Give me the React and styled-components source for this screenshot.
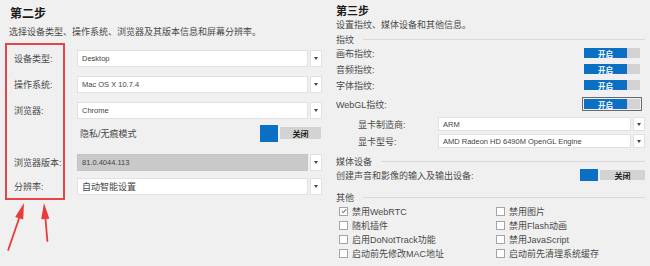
import styled, { createGlobalStyle } from 'styled-components'

const GlobalStyle = createGlobalStyle`
  html, body {
    margin: 0;
    padding: 0;
    background: #f0f0f0;
  }
  body {
    font-family: "Liberation Sans", "Noto Sans CJK SC", sans-serif;
    color: #4a4a4a;
  }
`

const Page = styled.div`
  width: 650px;
  height: 266px;
  overflow: hidden;
  display: grid;
  grid-template-columns: 333px 1fr;
  background: #f0f0f0;
`

const LeftPanel = styled.section`
  position: relative;
  display: flex;
  flex-direction: column;
`

const RightPanel = styled.section`
  display: flex;
  flex-direction: column;
  padding: 0 5px 0 3px;
`

const Title = styled.h2`
  margin: ${(p) => p.$top}px 0 0 ${(p) => p.$left}px;
  font-family: "Noto Sans CJK SC", sans-serif;
  font-size: ${(p) => p.$size}px;
  font-weight: 700;
  line-height: 16px;
  color: #1a1a1a;
`

const Subtitle = styled.p`
  margin: ${(p) => p.$top || 0}px 0 0 ${(p) => p.$left || 0}px;
  font-size: 9px;
  line-height: 14px;
  color: #4a4a4a;
  white-space: nowrap;
`

/* ---------- left form ---------- */

const Form = styled.div`
  position: relative;
  margin-top: 2px;
  display: flex;
  flex-direction: column;
  padding-right: 11px;
`

const Row = styled.div`
  display: grid;
  grid-template-columns: 77px 1fr;
  align-items: center;
  height: 18px;
  margin-top: ${(p) => p.$top}px;
`

const Label = styled.span`
  padding-left: 14px;
  font-size: 9px;
  color: #4a4a4a;
  white-space: nowrap;
`

const SelectBox = styled.div`
  display: flex;
  gap: 2px;
  height: ${(p) => p.$h || 17}px;
`

const SelectValue = styled.div`
  flex: 1;
  background: ${(p) => (p.$disabled ? '#c9c9c9' : '#fff')};
  border: 1px solid ${(p) => (p.$disabled ? '#c4c4c4' : '#e1e1e1')};
  padding-left: 4px;
  display: flex;
  align-items: center;
  font-size: ${(p) => (p.$cjk ? 9 : 7.5)}px;
  color: #444;
  white-space: nowrap;
  overflow: hidden;
`

const SelectArrow = styled.div`
  width: 10px;
  background: #fff;
  border: 1px solid #e1e1e1;
  display: flex;
  align-items: center;
  justify-content: center;

  &::after {
    content: '';
    border-left: 2px solid transparent;
    border-right: 2px solid transparent;
    border-top: 3px solid #444;
  }
`

const FieldLine = styled.div`
  display: flex;
  align-items: center;
  justify-content: space-between;
  padding-left: 3px;
  padding-right: 1px;
  font-size: 9px;
`

const RedFrame = styled.div`
  position: absolute;
  left: 5px;
  top: 2px;
  width: 56px;
  height: 153px;
  border: 2px solid #e2464a;
  pointer-events: none;
`

const Arrows = styled.svg`
  position: absolute;
  left: 0;
  top: 198px;
`

/* ---------- toggles ---------- */

const OffToggle = styled.div`
  display: flex;
  align-items: center;
  gap: 2px;
`

const OffKnob = styled.span`
  width: ${(p) => p.$w}px;
  height: ${(p) => p.$h}px;
  background: #0b6fc4;
`

const OffLabel = styled.span`
  width: ${(p) => p.$w}px;
  height: ${(p) => p.$h}px;
  background: #d3d3d3;
  display: flex;
  align-items: center;
  justify-content: center;
  font-size: 8px;
  font-weight: 700;
  color: #222;
`

const OnToggle = styled.div`
  display: flex;
  margin-right: ${(p) => (p.$focused ? 3 : 5)}px;
  padding: ${(p) => (p.$focused ? '1px' : '0')};
  border: ${(p) => (p.$focused ? '1px solid #6a6a6a' : 'none')};
`

const OnLabel = styled.span`
  width: 43px;
  height: 10px;
  background: #0b6fc4;
  color: #fff;
  font-size: 7.5px;
  font-weight: 700;
  display: flex;
  align-items: center;
  justify-content: center;
`

const OnRest = styled.span`
  width: 13px;
  height: 10px;
  background: #d3d3d3;
`

/* ---------- right side ---------- */

const Section = styled.div`
  display: flex;
  align-items: center;
  height: 14px;
  margin-top: ${(p) => p.$top || 0}px;
  font-size: 9px;
  color: #4a4a4a;

  &::after {
    content: '';
    flex: 1;
    height: 1px;
    margin-left: 9px;
    background: #dadada;
  }
`

const SwitchRow = styled.div`
  display: flex;
  align-items: center;
  justify-content: space-between;
  height: ${(p) => p.$h || 16}px;
  margin-top: ${(p) => p.$top || 0}px;
  font-size: 9px;
`

const GpuRow = styled.div`
  display: grid;
  grid-template-columns: 102px 1fr;
  align-items: center;
  margin-top: ${(p) => p.$top}px;
  font-size: 9px;
`

const GpuLabel = styled.span`
  padding-left: 22px;
`

const Checks = styled.div`
  display: grid;
  grid-template-columns: 157px 1fr;
  grid-auto-rows: 14px;
  padding-left: 3px;
`

const CheckItem = styled.label`
  display: flex;
  align-items: center;
  gap: 4px;
  font-size: 9px;
  color: #4a4a4a;
  white-space: nowrap;
`

const Box = styled.span`
  width: 7px;
  height: 7px;
  background: #fff;
  border: 1px solid #a4a4a4;
  display: flex;
  align-items: center;
  justify-content: center;
`

function Select({ value, disabled, cjk, h }) {
  return (
    <SelectBox $h={h}>
      <SelectValue $disabled={disabled} $cjk={cjk}>
        {value}
      </SelectValue>
      <SelectArrow />
    </SelectBox>
  )
}

function Off({ big }) {
  return big ? (
    <OffToggle>
      <OffKnob $w={18} $h={17} />
      <OffLabel $w={41} $h={12}>关闭</OffLabel>
    </OffToggle>
  ) : (
    <OffToggle>
      <OffKnob $w={18} $h={12} />
      <OffLabel $w={45} $h={10}>关闭</OffLabel>
    </OffToggle>
  )
}

function On({ focused }) {
  return (
    <OnToggle $focused={focused}>
      <OnLabel>开启</OnLabel>
      <OnRest />
    </OnToggle>
  )
}

function Check({ label, checked }) {
  return (
    <CheckItem>
      <Box>
        {checked && (
          <svg width="6" height="6" viewBox="0 0 6 6">
            <path d="M0.8 3.2 L2.3 4.6 L5.2 1.2" fill="none" stroke="#333" strokeWidth="0.9" />
          </svg>
        )}
      </Box>
      {label}
    </CheckItem>
  )
}

const checks = [
  ['禁用WebRTC', true],
  ['禁用图片', false],
  ['随机插件', false],
  ['禁用Flash动画', false],
  ['启用DoNotTrack功能', false],
  ['禁用JavaScript', false],
  ['启动前先修改MAC地址', false],
  ['启动前先清理系统缓存', false],
]

export default function App() {
  return (
    <Page>
      <GlobalStyle />
      <LeftPanel>
        <Title $top={5} $left={10} $size={12}>第二步</Title>
        <Subtitle $top={4} $left={9}>
          选择设备类型、操作系统、浏览器及其版本信息和屏幕分辨率。
        </Subtitle>
        <Form>
          <Row $top={8}>
            <Label>设备类型:</Label>
            <Select value="Desktop" />
          </Row>
          <Row $top={8}>
            <Label>操作系统:</Label>
            <Select value="Mac OS X 10.7.4" />
          </Row>
          <Row $top={8}>
            <Label>浏览器:</Label>
            <Select value="Chrome" />
          </Row>
          <Row $top={5}>
            <span />
            <FieldLine>
              隐私/无痕模式
              <Off big />
            </FieldLine>
          </Row>
          <Row $top={11}>
            <Label>浏览器版本:</Label>
            <Select value="81.0.4044.113" disabled />
          </Row>
          <Row $top={6}>
            <Label>分辨率:</Label>
            <Select value="自动智能设置" cjk />
          </Row>
          <RedFrame />
        </Form>
        <Arrows width="60" height="68" viewBox="0 198 60 68">
          <path d="M8.2 250 L19.2 218" stroke="#ea3b3b" strokeWidth="1.8" strokeLinecap="round" />
          <polygon points="24,203 23.2,219.6 15.2,217" fill="#ea3b3b" />
          <path d="M47.4 241 L45.4 218" stroke="#ea3b3b" strokeWidth="1.8" strokeLinecap="round" />
          <polygon points="44,203 49.4,218.7 41.2,219.3" fill="#ea3b3b" />
        </Arrows>
      </LeftPanel>

      <RightPanel>
        <Title $top={2} $left={0} $size={11}>第三步</Title>
        <Subtitle>设置指纹、媒体设备和其他信息。</Subtitle>
        <Section>指纹</Section>
        <SwitchRow $top={-1}>
          画布指纹:
          <On />
        </SwitchRow>
        <SwitchRow>
          音频指纹:
          <On />
        </SwitchRow>
        <SwitchRow>
          字体指纹:
          <On />
        </SwitchRow>
        <SwitchRow $h={18} $top={2}>
          WebGL指纹:
          <On focused />
        </SwitchRow>
        <GpuRow $top={4}>
          <GpuLabel>显卡制造商:</GpuLabel>
          <Select value="ARM" h={14} />
        </GpuRow>
        <GpuRow $top={3}>
          <GpuLabel>显卡型号:</GpuLabel>
          <Select value="AMD Radeon HD 6490M OpenGL Engine" h={14} />
        </GpuRow>
        <Section $top={6}>媒体设备</Section>
        <SwitchRow $h={14}>
          创建声音和影像的输入及输出设备:
          <Off />
        </SwitchRow>
        <Section $top={8}>其他</Section>
        <Checks>
          {checks.map(([label, checked]) => (
            <Check key={label} label={label} checked={checked} />
          ))}
        </Checks>
      </RightPanel>
    </Page>
  )
}
